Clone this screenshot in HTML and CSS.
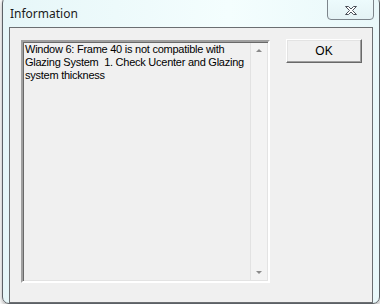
FILE: index.html
```html
<!DOCTYPE html>
<html lang="en">
<head>
    <meta charset="UTF-8">
    <title>Information</title>
    <link rel="stylesheet" href="styles.css">
</head>
<body>
    <div class="window">
        <div class="titlebar">
            <span class="title">Information</span>
            <button class="close" title="Close">
                <svg width="14" height="11" viewBox="0 0 14 11">
                    <path d="M1.5 1.5 L4.5 1.5 L7 4 L9.5 1.5 L12.5 1.5 L8.5 5.5 L12.5 9.5 L9.5 9.5 L7 7 L4.5 9.5 L1.5 9.5 L5.5 5.5 Z" fill="#fff" stroke="#4a4f58" stroke-width="1" stroke-linejoin="round"/>
                </svg>
            </button>
        </div>
        <div class="client">
            <div class="message">
                <div class="message-text">Window 6: Frame 40 is not compatible with Glazing System&nbsp; 1. Check Ucenter and Glazing system thickness</div>
                <div class="scrollbar">
                    <span class="arrow up"></span>
                    <span class="arrow down"></span>
                </div>
            </div>
            <button class="ok">OK</button>
        </div>
    </div>
</body>
</html>
```

FILE: styles.css
```css
body {
    margin: 0;
    background-color: #ffffff;
    font-family: 'Liberation Sans', Arial, sans-serif;
}
.window {
    width: 376px;
    height: 306px;
    margin: -4px 0 0 2px;
    border: 1px solid #5c6166;
    border-radius: 7px;
    background: linear-gradient(to right, #e6f6f8, #f4fefe 60%, #e9f8fa);
    box-shadow: 0 2px 4px rgba(0,0,0,0.35);
    display: flex;
    flex-direction: column;
}
.titlebar {
    height: 31px;
    display: flex;
    align-items: flex-start;
    justify-content: space-between;
    padding: 0 5px 0 7px;
}
.title {
    font-family: 'Noto Sans', sans-serif;
    font-size: 12px;
    color: #1a1a1a;
    margin-top: 8px;
}
.close {
    width: 47px;
    height: 23px;
    padding: 4px 0 0;
    margin: 0;
    border: 1px solid #7d858c;
    border-radius: 0 0 4px 4px;
    background: linear-gradient(to bottom, #eefcfd, #e4f2f5);
    display: flex;
    justify-content: center;
    align-items: center;
}
.client {
    margin: 0 6px;
    height: 267px;
    border: 1px solid #6b6e71;
    background-color: #f0f0f0;
    display: flex;
    align-items: flex-start;
    gap: 16px;
    padding: 12px 0 0 11px;
}
.message {
    width: 245px;
    height: 239px;
    border-style: solid;
    border-width: 2px;
    border-color: #a0a0a0 #ffffff #ffffff #a0a0a0;
    box-shadow: inset 1px 1px 0 #696969, inset -1px -1px 0 #e3e3e3;
    display: flex;
}
.message-text {
    flex: 1;
    padding: 1px 2px 0 2px;
    font-size: 11px;
    line-height: 13px;
    letter-spacing: -0.25px;
    color: #000;
}
.scrollbar {
    width: 16px;
    margin: 1px 1px 1px 0;
    border-left: 1px solid #e2e2e2;
    background-color: #f3f3f3;
    position: relative;
}
.arrow {
    position: absolute;
    left: 5px;
    width: 0;
    height: 0;
    border-left: 3px solid transparent;
    border-right: 3px solid transparent;
}
.arrow.up {
    top: 6px;
    border-bottom: 3px solid #8a8a8a;
}
.arrow.down {
    bottom: 6px;
    border-top: 3px solid #8a8a8a;
}
.ok {
    width: 76px;
    height: 24px;
    margin-top: -1px;
    padding: 0;
    border-style: solid;
    border-width: 1px;
    border-color: #ffffff #696969 #696969 #ffffff;
    box-shadow: inset -1px -1px 0 #a0a0a0, inset 1px 1px 0 #e3e3e3;
    background-color: #f0f0f0;
    font-family: 'Liberation Sans', Arial, sans-serif;
    font-size: 12px;
    color: #000;
}
```
